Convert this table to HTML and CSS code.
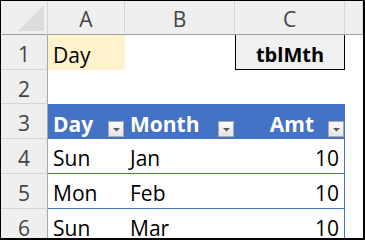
FILE: index.html
```html
<!DOCTYPE html>
<html lang="en">
<head>
    <meta charset="UTF-8">
    <meta name="viewport" content="width=device-width, initial-scale=1.0">
    <title>Sheet1</title>
    <link rel="stylesheet" href="styles.css">
</head>
<body>
    <div class="sheet">
        <!-- column headers -->
        <div class="corner"><span class="corner-mark"></span></div>
        <div class="col-head">A</div>
        <div class="col-head">B</div>
        <div class="col-head">C</div>
        <div class="col-head"></div>

        <!-- row 1 -->
        <div class="row-head">1</div>
        <div class="cell input">Day</div>
        <div class="cell"></div>
        <div class="cell name-box">tblMth</div>
        <div class="cell"></div>

        <!-- row 2 -->
        <div class="row-head">2</div>
        <div class="cell"></div>
        <div class="cell"></div>
        <div class="cell"></div>
        <div class="cell"></div>

        <!-- row 3: table header -->
        <div class="row-head">3</div>
        <div class="cell th">
            <span>Day</span>
            <span class="filter"><svg width="14" height="14" viewBox="0 0 14 14"><path d="M4 6h7l-3.5 3.5z" fill="#5a5a5a"/></svg></span>
        </div>
        <div class="cell th">
            <span>Month</span>
            <span class="filter"><svg width="14" height="14" viewBox="0 0 14 14"><path d="M4 6h7l-3.5 3.5z" fill="#5a5a5a"/></svg></span>
        </div>
        <div class="cell th th-num">
            <span>Amt</span>
            <span class="filter"><svg width="14" height="14" viewBox="0 0 14 14"><path d="M4 6h7l-3.5 3.5z" fill="#5a5a5a"/></svg></span>
        </div>
        <div class="cell"></div>

        <!-- rows 4-6: table data -->
        <div class="row-head">4</div>
        <div class="cell td">Sun</div>
        <div class="cell td">Jan</div>
        <div class="cell td num">10</div>
        <div class="cell"></div>

        <div class="row-head">5</div>
        <div class="cell td">Mon</div>
        <div class="cell td">Feb</div>
        <div class="cell td num">10</div>
        <div class="cell"></div>

        <div class="row-head">6</div>
        <div class="cell td">Sun</div>
        <div class="cell td">Mar</div>
        <div class="cell td num">10</div>
        <div class="cell"></div>
    </div>
</body>
</html>
```

FILE: styles.css
```css
body {
    margin: 0;
    background-color: #fff;
    font-family: "Open Sans", Lato, sans-serif;
    overflow: hidden;
}

.sheet {
    box-sizing: border-box;
    width: 365px;
    height: 240px;
    border-top: 1px solid #000;
    border-left: 1px solid #000;
    border-right: 2px solid #000;
    border-bottom: 2px solid #000;
    display: grid;
    grid-template-columns: 47px 77px 110px 110px 1fr;
    grid-template-rows: 34px 35px 34px repeat(4, 35px);
    overflow: hidden;
}

.sheet > div {
    box-sizing: border-box;
    min-width: 0;
}

/* headers */
.corner {
    background-color: #efefef;
    border-right: 1px solid #d6d6d6;
    border-bottom: 1px solid #a0a0a0;
    display: flex;
    justify-content: flex-end;
    align-items: flex-end;
    padding: 0 3px 3px 0;
}

.corner-mark {
    width: 26px;
    height: 26px;
    background-color: #dcdcdc;
    clip-path: polygon(100% 0, 100% 100%, 0 100%);
}

.col-head {
    background-color: #efefef;
    border-right: 1px solid #d6d6d6;
    border-bottom: 1px solid #a0a0a0;
    color: #444;
    font-size: 21px;
    display: flex;
    justify-content: center;
    align-items: center;
    padding-top: 2px;
}

.row-head {
    background-color: #efefef;
    border-right: 1px solid #a8a8a8;
    border-bottom: 1px solid #d6d6d6;
    color: #444;
    font-size: 21px;
    display: flex;
    justify-content: center;
    align-items: center;
    padding-top: 4px;
}

/* cells */
.cell {
    font-size: 21px;
    color: #000;
    display: flex;
    align-items: center;
    padding: 4px 5px 0 5px;
    white-space: nowrap;
}

.input {
    background-color: #fff2cc;
}

.name-box {
    background-color: #f0f0f0;
    border: 1px solid #000;
    border-top: none;
    justify-content: center;
    font-weight: bold;
    font-size: 20px;
}

/* table */
.th {
    background-color: #4472c4;
    color: #fff;
    font-weight: bold;
    padding-right: 1px;
    justify-content: space-between;
}

.th-num {
    justify-content: flex-end;
    gap: 14px;
}

.filter {
    box-sizing: border-box;
    width: 16px;
    height: 16px;
    align-self: flex-end;
    margin-bottom: 2px;
    border: 1px solid #a8a8a8;
    background: linear-gradient(#fbfbfb, #e4e4e4);
    display: flex;
}

.td {
    border-bottom: 1px solid #4472c4;
}

.num {
    justify-content: flex-end;
    border-right: 1px solid #4472c4;
}
```
